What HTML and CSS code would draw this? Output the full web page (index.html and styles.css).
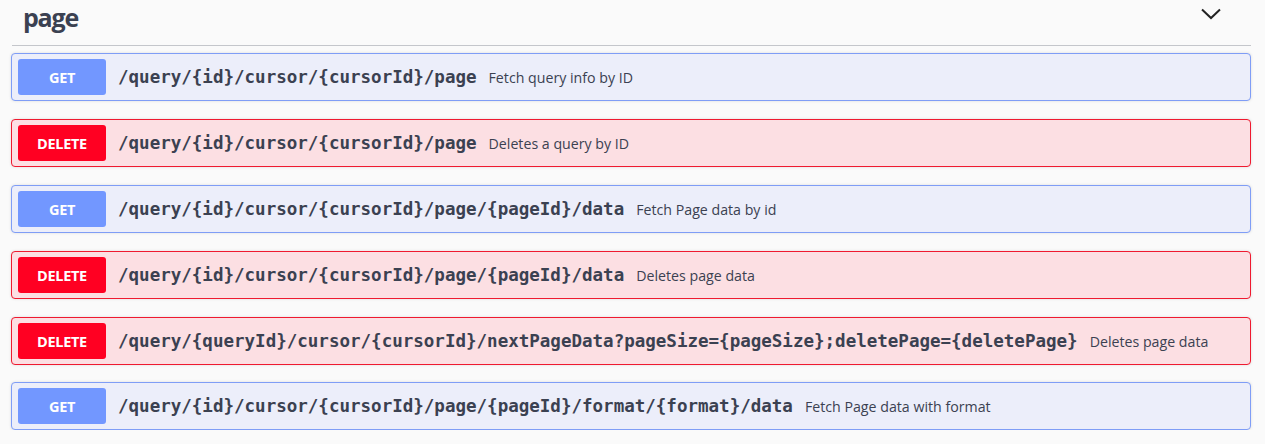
FILE: index.html
```html
<!DOCTYPE html>
<html>
<head>
<meta charset="utf-8">
<link rel="stylesheet" href="styles.css">
</head>
<body>
<div class="tag-section">
  <div class="tag-header">
    <h3 class="tag-title">page</h3>
    <svg class="chevron" width="20" height="12" viewBox="0 0 20 12"><path d="M1 1.5 L10 10 L19 1.5" fill="none" stroke="#222" stroke-width="2"/></svg>
  </div>
  <div class="ops">
    <div class="op op-get">
      <span class="method">GET</span>
      <span class="path">/query/{id}/cursor/{cursorId}/page</span>
      <span class="desc">Fetch query info by ID</span>
    </div>
    <div class="op op-delete">
      <span class="method">DELETE</span>
      <span class="path">/query/{id}/cursor/{cursorId}/page</span>
      <span class="desc">Deletes a query by ID</span>
    </div>
    <div class="op op-get">
      <span class="method">GET</span>
      <span class="path">/query/{id}/cursor/{cursorId}/page/{pageId}/data</span>
      <span class="desc">Fetch Page data by id</span>
    </div>
    <div class="op op-delete">
      <span class="method">DELETE</span>
      <span class="path">/query/{id}/cursor/{cursorId}/page/{pageId}/data</span>
      <span class="desc">Deletes page data</span>
    </div>
    <div class="op op-delete">
      <span class="method">DELETE</span>
      <span class="path">/query/{queryId}/cursor/{cursorId}/nextPageData?pageSize={pageSize};deletePage={deletePage}</span>
      <span class="desc">Deletes page data</span>
    </div>
    <div class="op op-get">
      <span class="method">GET</span>
      <span class="path">/query/{id}/cursor/{cursorId}/page/{pageId}/format/{format}/data</span>
      <span class="desc">Fetch Page data with format</span>
    </div>
  </div>
</div>
</body>
</html>
```

FILE: styles.css
```css
html, body {
  margin: 0;
  padding: 0;
  background: #fafafa;
}
body {
  font-family: "Open Sans", "Liberation Sans", sans-serif;
  color: #3b4151;
}
.tag-section {
  padding: 0 14px 0 11px;
}
.tag-header {
  display: flex;
  align-items: center;
  justify-content: space-between;
  box-sizing: border-box;
  height: 56px;
  margin: -10px 0 0 1px;
  padding: 0 30px 0 11px;
  border-bottom: 1px solid #c4c6cb;
}
.tag-title {
  margin: 0;
  font-size: 25px;
  font-weight: 700;
  color: #3b4151;
  letter-spacing: -1.2px;
  position: relative;
  top: -1px;
}
.chevron {
  display: block;
  position: relative;
  top: -4px;
}
.ops {
  display: flex;
  flex-direction: column;
  gap: 18px;
  padding-top: 7px;
}
.op {
  display: flex;
  align-items: center;
  height: 48px;
  box-sizing: border-box;
  border: 1px solid;
  border-radius: 4px;
  padding: 0 6px;
  box-shadow: 0 0 3px rgba(0,0,0,0.12);
}
.op:last-child {
  margin-top: -1px;
}
.op-get {
  background: #eceefa;
  border-color: #7f9df6;
}
.op-delete {
  background: #fcdfe3;
  border-color: #ef1a30;
}
.method {
  width: 88px;
  height: 36px;
  flex: none;
  display: flex;
  align-items: center;
  justify-content: center;
  border-radius: 3px;
  color: #fff;
  font-size: 14.5px;
  font-weight: 700;
  letter-spacing: -0.3px;
}
.op-get .method { background: #7297ff; }
.op-delete .method { background: #ff0022; }
.path {
  margin-left: 12px;
  font-family: "DejaVu Sans Mono", "Liberation Mono", monospace;
  font-weight: 700;
  font-size: 17.52px;
  color: #3b4151;
}
.desc {
  margin-left: 12px;
  font-size: 14.2px;
  color: #3b4151;
}
```
